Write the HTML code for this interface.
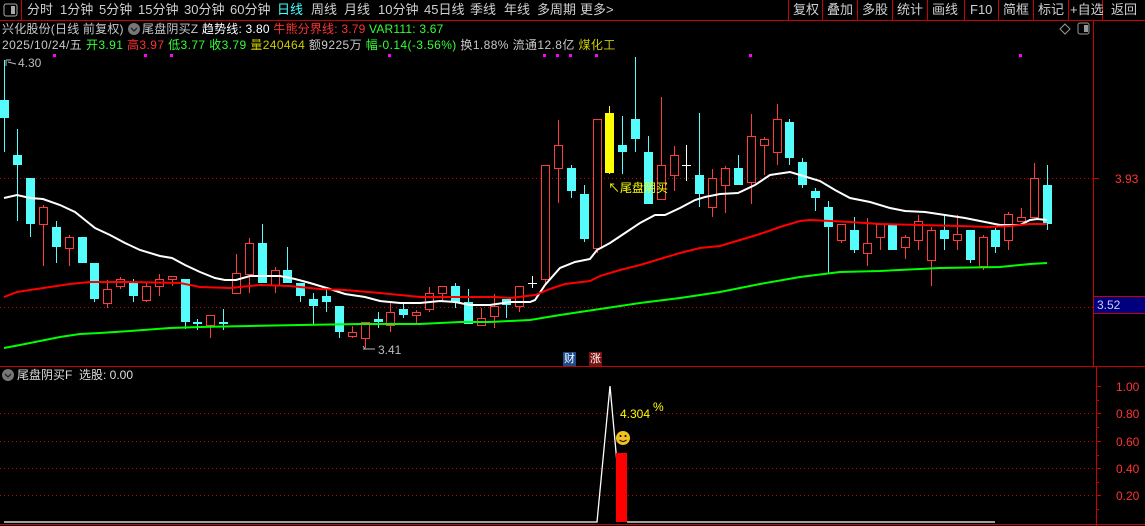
<!DOCTYPE html>
<html><head><meta charset="utf-8"><style>
body{margin:0;background:#000;width:1145px;height:526px;overflow:hidden;position:relative;font-family:"Liberation Sans","WenQuanYi Zen Hei","Noto Sans CJK SC",sans-serif;font-size:12px;color:#c8c8c8}
.a{position:absolute;white-space:nowrap;line-height:14px}
.tb{font-size:13px;top:3px;color:#d0d0d0}
</style></head><body>
<svg width="1145" height="526" style="position:absolute;left:0;top:0" id="s">
<line x1="0" y1="20.5" x2="1145" y2="20.5" stroke="#c00" />
<rect x="4" y="4" width="13" height="12" fill="none" stroke="#aaa" rx="2"/><rect x="11" y="6" width="4" height="8" fill="#aaa"/>
<line x1="21.5" y1="0" x2="21.5" y2="20" stroke="#c00"/>
<g stroke="#c00"><line x1="788.5" y1="0" x2="788.5" y2="20"/><line x1="822.5" y1="0" x2="822.5" y2="20"/><line x1="857.5" y1="0" x2="857.5" y2="20"/><line x1="892.5" y1="0" x2="892.5" y2="20"/><line x1="927.5" y1="0" x2="927.5" y2="20"/><line x1="964.5" y1="0" x2="964.5" y2="20"/><line x1="998.5" y1="0" x2="998.5" y2="20"/><line x1="1033.5" y1="0" x2="1033.5" y2="20"/><line x1="1068.5" y1="0" x2="1068.5" y2="20"/><line x1="1102.5" y1="0" x2="1102.5" y2="20"/></g>
<line x1="1093.5" y1="20" x2="1093.5" y2="366" stroke="#c00"/>
<line x1="1096.5" y1="366" x2="1096.5" y2="526" stroke="#c00"/>
<line x1="0" y1="366.5" x2="1145" y2="366.5" stroke="#c00"/>
<line x1="0" y1="524.5" x2="1145" y2="524.5" stroke="#c00"/>
<g stroke="#c00" stroke-dasharray="1,3"><line x1="0" y1="178.5" x2="1093" y2="178.5"/><line x1="0" y1="307.5" x2="1093" y2="307.5"/>
<line x1="0" y1="413.5" x2="1096" y2="413.5"/><line x1="0" y1="441.5" x2="1096" y2="441.5"/><line x1="0" y1="468.5" x2="1096" y2="468.5"/><line x1="0" y1="495.5" x2="1096" y2="495.5"/></g>
<line x1="1093" y1="178.5" x2="1099" y2="178.5" stroke="#c00"/>
<g stroke="#c00"><line x1="1096" y1="386.5" x2="1101" y2="386.5"/><line x1="1096" y1="413.5" x2="1101" y2="413.5"/><line x1="1096" y1="441.5" x2="1101" y2="441.5"/><line x1="1096" y1="468.5" x2="1101" y2="468.5"/><line x1="1096" y1="495.5" x2="1101" y2="495.5"/><line x1="1096" y1="400.5" x2="1099" y2="400.5"/><line x1="1096" y1="427.5" x2="1099" y2="427.5"/><line x1="1096" y1="455.5" x2="1099" y2="455.5"/><line x1="1096" y1="482.5" x2="1099" y2="482.5"/><line x1="1096" y1="509.5" x2="1099" y2="509.5"/></g>
<rect x="1094" y="297" width="51" height="16" fill="#00007f"/>
<line x1="1094" y1="296.5" x2="1145" y2="296.5" stroke="#c00"/><line x1="1094" y1="313.5" x2="1145" y2="313.5" stroke="#c00"/>
<g fill="#f0f"><rect x="53" y="54" width="3" height="3"/><rect x="144" y="54" width="3" height="3"/><rect x="170" y="54" width="3" height="3"/><rect x="388" y="54" width="3" height="3"/><rect x="543" y="54" width="3" height="3"/><rect x="556" y="54" width="3" height="3"/><rect x="569" y="54" width="3" height="3"/><rect x="595" y="54" width="3" height="3"/><rect x="749" y="54" width="3" height="3"/><rect x="1019" y="54" width="3" height="3"/></g>
<path d="M1065 24 l5 5 l-5 5 l-5 -5z" fill="none" stroke="#999"/>
<rect x="1078" y="23" width="11" height="11" fill="none" stroke="#999" rx="2"/><rect x="1084" y="25" width="4" height="7" fill="#999"/>
<g id="c"></g>
<polyline fill="none" stroke="#fff" stroke-width="2" points="4,198 17,195 30,198 43,199 60,205 75,212 85,220 95,228 110,235 125,243 140,250 160,256 172,258 185,265 200,272 215,278 225,280 236,280 250,276 262,276 280,276 295,279 310,283 330,289 345,294 365,297 380,301 400,303 420,303 440,301 455,302 470,305 490,305 510,302 530,302 535,300 545,285 560,268 575,262 590,259 597,250 610,243 625,233 640,223 655,215 665,215 680,208 695,200 705,197 720,194 738,193 755,185 770,175 790,172 800,175 820,181 835,190 850,198 870,202 890,208 905,211 925,212 945,215 965,218 985,222 1000,225 1020,225 1030,220 1037,219 1047,220"/>
<polyline fill="none" stroke="#f00" stroke-width="2" points="4,297 17,292 30,290 50,287 70,284 90,282 130,282 180,283 200,287 230,288 260,285 290,286 320,289 345,290 380,293 400,295 420,297 495,297 510,298 535,295 550,289 565,284 590,281 600,276 620,270 640,265 660,259 680,253 700,248 720,246 740,240 760,234 780,227 800,221 810,220 830,221 850,222 880,224 920,225 960,226 990,227 1010,226 1030,224 1047,224"/>
<polyline fill="none" stroke="#0f0" stroke-width="2" points="4,348 20,345 40,341 60,337 80,334 100,333 130,331 170,328 200,327 250,326 300,325 360,324 420,324 460,322 490,322 530,320 560,315 600,309 640,303 680,298 720,292 760,284 800,277 840,272 880,271 940,268 1000,267 1030,264 1047,263"/>
<polyline fill="none" stroke="#fff" stroke-width="1.3" points="4,522 597,522 610,386 618,474"/>
<line x1="627" y1="522" x2="995" y2="522" stroke="#fff" stroke-width="1.3"/>
<rect x="616" y="453" width="11" height="69" fill="#f00"/>
<circle cx="623" cy="438" r="7" fill="#f0c020"/><circle cx="620.5" cy="436" r="1" fill="#000"/><circle cx="625.5" cy="436" r="1" fill="#000"/><path d="M619.5 440 q3.5 3 7 0" stroke="#000" fill="none"/>
<circle cx="8" cy="375" r="6" fill="#777"/><path d="M5 374 l3 3 l3 -3" stroke="#222" fill="none" stroke-width="1.3"/>
<circle cx="134" cy="29" r="6" fill="#777"/><path d="M131 28 l3 3 l3 -3" stroke="#222" fill="none" stroke-width="1.3"/>
<rect x="563" y="352" width="13" height="14" fill="#1a4a8a"/><rect x="589" y="352" width="13" height="14" fill="#7a1010"/>
<path d="M6 60 l0 6 M6 60 l5 0 M8 62 l8 2" stroke="#bbb" fill="none"/>
<path d="M365 349 l-2 -3 M363 349 l12 0" stroke="#bbb" fill="none"/>
</svg>
<div class="a tb" style="left:27px">分时</div><div class="a tb" style="left:60px">1分钟</div><div class="a tb" style="left:99px">5分钟</div><div class="a tb" style="left:138px">15分钟</div><div class="a tb" style="left:184px">30分钟</div><div class="a tb" style="left:230px">60分钟</div><div class="a tb" style="left:277px;color:#4ff">日线</div><div class="a tb" style="left:311px">周线</div><div class="a tb" style="left:344px">月线</div><div class="a tb" style="left:378px">10分钟</div><div class="a tb" style="left:424px">45日线</div><div class="a tb" style="left:470px">季线</div><div class="a tb" style="left:504px">年线</div><div class="a tb" style="left:537px">多周期</div><div class="a tb" style="left:580px">更多&gt;</div>
<div class="a tb" style="left:793px">复权</div><div class="a tb" style="left:827px">叠加</div><div class="a tb" style="left:862px">多股</div><div class="a tb" style="left:897px">统计</div><div class="a tb" style="left:932px">画线</div><div class="a tb" style="left:970px">F10</div><div class="a tb" style="left:1003px">简框</div><div class="a tb" style="left:1038px">标记</div><div class="a tb" style="left:1070px">+自选</div><div class="a tb" style="left:1111px">返回</div>
<div class="a" style="left:2px;top:22px;letter-spacing:0.2px">兴化股份(日线 前复权)</div>
<div class="a" style="left:142px;top:22px;letter-spacing:0.2px">尾盘阴买Z <span style="color:#fff">趋势线: 3.80</span> <span style="color:#f33">牛熊分界线: 3.79</span> <span style="color:#3f3">VAR111: 3.67</span></div>
<div class="a" style="left:2px;top:38px;letter-spacing:0.4px">2025/10/24/五 <span style="color:#3f3">开3.91</span> <span style="color:#f33">高3.97</span> <span style="color:#3f3">低3.77</span> <span style="color:#3f3">收3.79</span> <span style="color:#cc0">量240464</span> 额9225万 <span style="color:#3f3">幅-0.14(-3.56%)</span> 换1.88% 流通12.8亿 <span style="color:#cc0">煤化工</span></div>
<div class="a" style="left:18px;top:56px;color:#bbb">4.30</div>
<div class="a" style="left:378px;top:343px;color:#bbb">3.41</div>
<div class="a" style="left:564px;top:352px;color:#fff;font-size:11px">财</div><div class="a" style="left:590px;top:352px;color:#fff;font-size:11px">涨</div>
<div class="a" style="left:608px;top:181px;color:#ff0">↖尾盘阴买</div>
<div class="a" style="left:1115px;top:172px;color:#f33">3.93</div>
<div class="a" style="left:1097px;top:298px;color:#ccf">3.52</div>
<div class="a" style="left:17px;top:368px;color:#ddd">尾盘阴买F &nbsp;选股: 0.00</div>
<div class="a" style="left:620px;top:407px;color:#ff0">4.304</div><div class="a" style="left:653px;top:400px;color:#ff0">%</div>
<div class="a" style="left:1116px;top:380px;color:#f33">1.00</div><div class="a" style="left:1116px;top:407px;color:#f33">0.80</div><div class="a" style="left:1116px;top:435px;color:#f33">0.60</div><div class="a" style="left:1116px;top:462px;color:#f33">0.40</div><div class="a" style="left:1116px;top:489px;color:#f33">0.20</div>
<script>
var d=[[4,'c',100,118,60,152],[17,'c',155,165,129,221],[30,'c',178,224,178,237],[43,'r',207,224,205,266],[56,'c',227,247,221,263],[69,'r',237,248,235,266],[82,'c',237,263,237,263],[94,'c',263,299,263,302],[107,'r',289,303,280,308],[120,'r',279,286,277,289],[133,'c',283,296,279,302],[146,'r',286,300,283,302],[159,'r',279,286,274,296],[172,'r',276,279,276,286],[185,'c',279,322,279,329],[197,'c',322,324,319,330],[210,'r',315,325,315,338],[223,'c',322,324,309,330],[236,'r',273,293,254,293],[249,'r',243,274,238,293],[262,'c',243,283,224,283],[275,'r',270,285,267,293],[287,'c',270,283,247,283],[300,'c',283,296,283,302],[313,'c',299,306,293,324],[326,'c',296,302,288,312],[339,'c',306,332,306,338],[352,'r',332,336,326,338],[365,'r',322,338,322,348],[378,'c',319,322,312,328],[390,'r',312,325,302,332],[403,'c',309,315,303,318],[416,'r',312,315,310,324],[429,'r',293,309,287,312],[442,'r',286,293,286,302],[455,'c',286,302,283,308],[468,'c',302,324,289,324],[481,'r',318,325,308,325],[494,'r',306,316,294,328],[506,'c',299,305,299,318],[519,'r',286,306,286,312],[532,'w',283,283,276,288],[545,'r',165,279,165,285],[558,'r',145,168,120,203],[571,'c',168,191,165,198],[584,'c',194,239,185,242],[597,'r',119,248,119,253],[609,'y',113,173,106,174],[622,'c',145,152,116,174],[635,'c',119,139,57,152],[648,'c',152,204,136,204],[661,'r',165,199,97,200],[674,'r',155,175,146,191],[686,'w',165,165,145,181],[699,'c',175,194,113,207],[712,'r',178,207,169,217],[725,'r',168,185,166,213],[738,'c',168,185,155,185],[751,'r',136,182,114,204],[764,'r',139,145,137,175],[777,'r',119,152,104,165],[789,'c',122,158,119,165],[802,'c',162,185,158,188],[815,'c',191,198,188,211],[828,'c',207,227,201,273],[841,'r',224,240,224,243],[854,'c',230,250,217,253],[867,'r',243,253,218,266],[880,'r',224,237,224,250],[892,'c',225,250,225,250],[905,'r',237,247,235,259],[918,'r',221,240,215,250],[931,'r',230,260,227,286],[944,'c',230,239,214,250],[957,'r',234,240,215,250],[970,'c',230,260,230,263],[983,'r',237,266,235,270],[995,'c',230,247,228,253],[1008,'r',214,240,212,250],[1021,'r',217,221,208,221],[1034,'r',178,217,163,217],[1047,'c',185,224,165,230]];
var h='';d.forEach(function(c){var x=c[0],t=c[1],col=t=='c'?'#54fcfc':t=='r'?'#ff3c3c':t=='y'?'#ff0':'#fff';
h+='<line x1="'+(x+.5)+'" y1="'+c[4]+'" x2="'+(x+.5)+'" y2="'+c[5]+'" stroke="'+col+'"/>';
if(t=='w'){h+='<line x1="'+(x-4)+'" y1="'+(c[2]+.5)+'" x2="'+(x+5)+'" y2="'+(c[2]+.5)+'" stroke="#fff"/>';}
else if(t=='r'){h+='<rect x="'+(x-3.5)+'" y="'+(c[2]+.5)+'" width="8" height="'+Math.max(c[3]-c[2],2)+'" fill="#000" stroke="'+col+'"/>';}
else{h+='<rect x="'+(x-4)+'" y="'+c[2]+'" width="9" height="'+Math.max(c[3]-c[2],2)+'" fill="'+col+'"/>';}});
document.getElementById('c').innerHTML=h;
</script>
</body></html>
